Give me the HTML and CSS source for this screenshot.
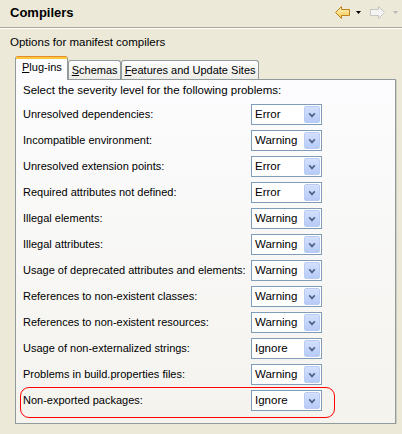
FILE: index.html
```html
<!DOCTYPE html>
<html>
<head>
<meta charset="utf-8">
<link rel="stylesheet" href="styles.css">
</head>
<body>
<div class="header">
  <div class="title">Compilers</div>
  <div class="nav">
    <svg class="arrow" width="15" height="13" viewBox="0 0 15 13">
      <defs><linearGradient id="gy" x1="0" y1="0" x2="0" y2="1"><stop offset="0" stop-color="#fff6c8"/><stop offset="1" stop-color="#f3c64a"/></linearGradient></defs>
      <path d="M0.5 6.5 L6.5 0.5 L6.5 3.5 L14.5 3.5 L14.5 9.5 L6.5 9.5 L6.5 12.5 Z" fill="url(#gy)" stroke="#c0801c" stroke-width="1" stroke-linejoin="round"/>
    </svg>
    <svg class="tri" width="5" height="3" viewBox="0 0 5 3"><path d="M0 0H5L2.5 3Z" fill="#000"/></svg>
    <svg class="arrow fwd" width="15" height="13" viewBox="0 0 15 13">
      <path d="M14.5 6.5 L8.5 0.5 L8.5 3.5 L0.5 3.5 L0.5 9.5 L8.5 9.5 L8.5 12.5 Z" fill="#f4f4f2" stroke="#c6c6c6" stroke-width="1" stroke-linejoin="round"/>
    </svg>
    <svg class="tri" width="5" height="3" viewBox="0 0 5 3"><path d="M0 0H5L2.5 3Z" fill="#b8b8b8"/></svg>
  </div>
</div>
<div class="desc">Options for manifest compilers</div>
<div class="tabs">
  <div class="tab active"><span><u>P</u>lug-ins</span></div>
  <div class="tab"><span><u>S</u>chemas</span></div>
  <div class="tab"><span><u>F</u>eatures and Update Sites</span></div>
</div>
<div class="panel">
  <div class="intro">Select the severity level for the following problems:</div>
  <div class="row"><span>Unresolved dependencies:</span><div class="combo"><span>Error</span><i class="btn"></i></div></div>
  <div class="row"><span>Incompatible environment:</span><div class="combo"><span>Warning</span><i class="btn"></i></div></div>
  <div class="row"><span>Unresolved extension points:</span><div class="combo"><span>Error</span><i class="btn"></i></div></div>
  <div class="row"><span>Required attributes not defined:</span><div class="combo"><span>Error</span><i class="btn"></i></div></div>
  <div class="row"><span>Illegal elements:</span><div class="combo"><span>Warning</span><i class="btn"></i></div></div>
  <div class="row"><span>Illegal attributes:</span><div class="combo"><span>Warning</span><i class="btn"></i></div></div>
  <div class="row"><span>Usage of deprecated attributes and elements:</span><div class="combo"><span>Warning</span><i class="btn"></i></div></div>
  <div class="row"><span>References to non-existent classes:</span><div class="combo"><span>Warning</span><i class="btn"></i></div></div>
  <div class="row"><span>References to non-existent resources:</span><div class="combo"><span>Warning</span><i class="btn"></i></div></div>
  <div class="row"><span>Usage of non-externalized strings:</span><div class="combo"><span>Ignore</span><i class="btn"></i></div></div>
  <div class="row"><span>Problems in build.properties files:</span><div class="combo"><span>Warning</span><i class="btn"></i></div></div>
  <div class="row highlight"><span>Non-exported packages:</span><div class="combo"><span>Ignore</span><i class="btn"></i></div></div>
</div>
</body>
</html>
```
FILE: styles.css
```css
html, body {
  margin: 0;
  padding: 0;
  background: #ece9d8;
  font-family: "Liberation Sans", Arial, sans-serif;
  font-size: 11.5px;
  color: #000;
}
.header {
  height: 27px;
  display: flex;
  align-items: center;
  justify-content: space-between;
  padding: 0 4px 0 10px;
  border-bottom: 1px solid #aca899;
  box-shadow: 0 1px 0 #fff;
}
.title {
  font-weight: bold;
  font-size: 13px;
  color: #000;
  margin-top: -2px;
}
.nav {
  display: flex;
  align-items: center;
  margin-top: -3px;
}
.arrow { display: block; }
.tri { display: block; margin: 0 0 0 6px; }
.fwd { margin-left: 9px; }
.nav .tri:last-child { margin-left: 8px; }
.desc {
  padding: 7px 0 0 10px;
  height: 15px;
  line-height: 15px;
}
.tabs {
  display: flex;
  align-items: flex-end;
  margin: 5px 0 0 15px;
  height: 24px;
  position: relative;
  z-index: 2;
  font-size: 11px;
}
.tab {
  height: 19px;
  box-sizing: border-box;
  border: 1px solid #919b9c;
  border-bottom: none;
  border-radius: 3px 3px 0 0;
  background: linear-gradient(#fefefe, #ecebe6);
  padding: 0 2px 0 3px;
  display: flex;
  align-items: center;
  line-height: 13px;
  white-space: nowrap;
}
.tab.active {
  height: 24px;
  border-top: 1px solid #e68b2c;
  background: #fcfcfe;
  position: relative;
  top: 1px;
  padding: 1px 5px 4px 6px;
}
.tab.active::after {
  content: "";
  position: absolute;
  left: 0; right: 0; top: 0;
  height: 2px;
  background: #ffc83c;
}
.tab u { text-decoration: underline; }
.panel {
  position: relative;
  margin-left: 15px;
  width: 381px;
  height: 345px;
  border: 1px solid #919b9c;
  box-shadow: 1px 1px 0 #d0cdc0;
  background: linear-gradient(#fcfcfe, #f4f3ee);
  padding: 0 0 0 7px;
  box-sizing: border-box;
}
.intro {
  height: 21px;
  line-height: 21px;
  white-space: nowrap;
}
.row {
  height: 26px;
  display: flex;
  align-items: center;
  justify-content: space-between;
  width: 299px;
  white-space: nowrap;
  font-size: 11px;
}
.combo {
  width: 71px;
  height: 21px;
  flex: none;
  box-sizing: border-box;
  border: 1px solid #7f9db9;
  background: #fff;
  display: flex;
  align-items: center;
  justify-content: space-between;
  padding: 0 1px 0 3px;
  font-size: 11.5px;
}
.btn {
  width: 16px;
  height: 17px;
  box-sizing: border-box;
  border: 1px solid #bacbf4;
  border-radius: 2px;
  background: linear-gradient(#d3e0fd, #b7cbf6);
  position: relative;
}
.btn::after {
  content: "";
  position: absolute;
  left: 4px;
  top: 4px;
  width: 4px;
  height: 4px;
  border-right: 2px solid #4d6185;
  border-bottom: 2px solid #4d6185;
  transform: rotate(45deg) scale(0.8);
}
.highlight::before {
  content: "";
  position: absolute;
  left: 4px;
  width: 315px;
  height: 31px;
  bottom: 5px;
  border: 1px solid #ff0000;
  border-radius: 9px;
  box-sizing: border-box;
}
```
